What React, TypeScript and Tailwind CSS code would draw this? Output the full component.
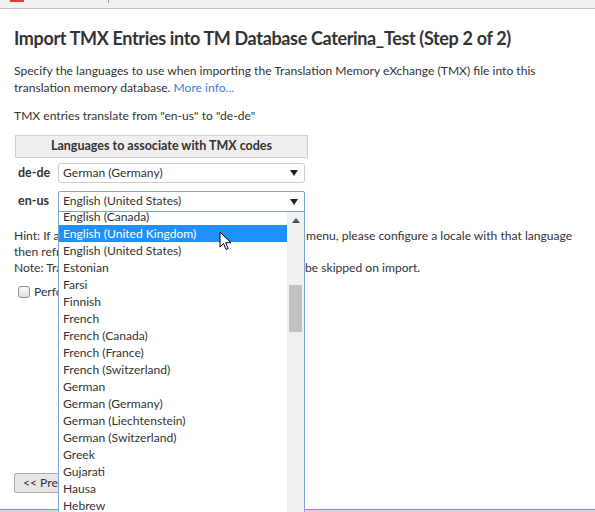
import { useState } from 'react';

const languages = [
  'English (Canada)',
  'English (United Kingdom)',
  'English (United States)',
  'Estonian',
  'Farsi',
  'Finnish',
  'French',
  'French (Canada)',
  'French (France)',
  'French (Switzerland)',
  'German',
  'German (Germany)',
  'German (Liechtenstein)',
  'German (Switzerland)',
  'Greek',
  'Gujarati',
  'Hausa',
  'Hebrew',
  'Hindi',
];

function Caret() {
  return (
    <svg width="8" height="6" viewBox="0 0 8 6" className="shrink-0">
      <path d="M0 0h8L4 6z" fill="#222" />
    </svg>
  );
}

export default function App() {
  const [hovered] = useState('English (United Kingdom)');

  return (
    <div
      className="relative h-[512px] w-[595px] overflow-hidden bg-white text-[#333] flex flex-col"
      style={{ fontFamily: 'Lato, "Open Sans", sans-serif' }}
    >
      {/* browser chrome leftovers */}
      <div className="h-[9px] shrink-0 bg-[#f1f1f1] border-b border-[#c6c6c6] flex items-start">
        <div className="ml-[10px] h-[2px] w-[14px] bg-[#e03c31]" />
        <div className="ml-[84px] h-[3px] w-px bg-[#999]" />
      </div>

      <div className="flex-1 min-h-0 overflow-hidden px-[14px] text-[12.1px]">
        <h1 className="mt-[16px] text-[18px] leading-[26px] font-bold tracking-[-0.35px] text-[#333] whitespace-nowrap">
          Import TMX Entries into TM Database Caterina_Test (Step 2 of 2)
        </h1>

        <p className="mt-[11px] leading-[17px]">
          Specify the languages to use when importing the Translation Memory eXchange (TMX) file into this
          <br />
          translation memory database. <a className="text-[#3b7ddd]">More info...</a>
        </p>

        <p className="mt-[11px] leading-[17px]">TMX entries translate from "en-us" to "de-de"</p>

        <div className="mt-[11px] w-[294px] pl-px">
          <div className="h-[23px] border border-[#cfcfcf] bg-[#eeeeee] flex items-center justify-center text-[12.5px] font-bold">
            Languages to associate with TMX codes
          </div>

          <div className="mt-[5px] flex items-center gap-[6px]">
            <span className="w-[37px] pl-[3px] text-[12.5px] font-bold">de-de</span>
            <div className="h-[20px] w-[247px] rounded-[3px] border border-[#cccccc] bg-white flex items-center justify-between pl-[4px] pr-[6px]">
              German (Germany)
              <Caret />
            </div>
          </div>

          <div className="mt-[8px] flex items-center gap-[6px]">
            <span className="w-[37px] pl-[3px] text-[12.5px] font-bold">en-us</span>
            <div className="h-[21px] w-[247px] rounded-t-[2px] border border-[#7ea4d1] bg-white flex items-center justify-between pl-[4px] pr-[6px]">
              English (United States)
              <Caret />
            </div>
          </div>
        </div>

        <div className="mt-[16px] leading-[16px] whitespace-nowrap">
          <p>
            <span className="inline-block w-[292px] overflow-hidden align-bottom">
              Hint: If a language is not shown in the drop-down
            </span>
            menu, please configure a locale with that language
            <br />
            then refresh this page.
          </p>
          <p>
            <span className="inline-block w-[291px] overflow-hidden align-bottom">
              Note: Translation units in other languages will
            </span>
            be skipped on import.
          </p>
        </div>

        <label className="mt-[7px] ml-[4px] flex items-center gap-[4px]">
          <span className="h-[12px] w-[12px] rounded-[3px] border border-[#8f8f8f] bg-gradient-to-b from-[#fafafa] to-[#dedede]" />
          Perform a full import
        </label>

        <div className="mt-[172px] flex gap-2">
          <button className="h-[20px] rounded-[2px] border border-[#adadad] bg-[#e6e6e6] px-[8px] leading-[18px]">
            &lt;&lt; Previous
          </button>
        </div>
      </div>

      <div className="h-[3px] shrink-0 border-t border-[#45b2c4] bg-[#d5d5d5]" />

      {/* open select list */}
      <div className="absolute left-[58px] top-[211px] w-[247px] h-[310px] border border-[#7ea4d1] bg-white overflow-hidden flex text-[12.1px]">
        <ul className="flex-1 -mt-[4px]">
          {languages.map((l) => (
            <li
              key={l}
              className={
                l === hovered
                  ? 'h-[17px] leading-[17px] pl-[4px] bg-[#1e90ff] text-white'
                  : 'h-[17px] leading-[17px] pl-[4px]'
              }
            >
              {l}
            </li>
          ))}
        </ul>
        <div className="w-[17px] shrink-0 bg-[#f0f0f0] flex flex-col items-center">
          <svg width="8" height="5" viewBox="0 0 8 5" className="mt-[6px]">
            <path d="M0 5h8L4 0z" fill="#505050" />
          </svg>
          <div className="mt-[62px] h-[47px] w-[13px] bg-[#c1c1c1]" />
        </div>
      </div>

      {/* mouse pointer */}
      <svg className="absolute left-[219px] top-[231px]" width="14" height="20" viewBox="0 0 14 20">
        <path d="M1 1v15l3.5-3.5 2.5 6 2.2-1-2.5-5.8H12z" fill="#fff" stroke="#000" strokeWidth="1" strokeLinejoin="round" />
      </svg>
    </div>
  );
}
